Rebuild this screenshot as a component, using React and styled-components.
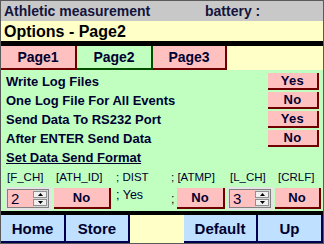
import React from "react";
import styled, { createGlobalStyle } from "styled-components";

const COLORS = {
  gray: "#c8c8c8",
  yellow: "#ffffc8",
  green: "#c0ffc0",
  pink: "#ffc0c0",
  blue: "#c0e0ff",
  ink: "#000030",
  redShadow: "#700000",
  greenShadow: "#005000",
  blueShadow: "#000050",
};

const GlobalStyle = createGlobalStyle`
  body {
    margin: 0;
    font-family: "Liberation Sans", Arial, sans-serif;
  }
`;

const options = [
  { label: "Write Log Files", value: "Yes" },
  { label: "One Log File For All Events", value: "No" },
  { label: "Send Data To RS232 Port", value: "Yes" },
  { label: "After ENTER Send Data", value: "No" },
];

function SpinBox({ value }) {
  return (
    <Spin>
      <SpinField>{value}</SpinField>
      <SpinArrows>
        <SpinArrow>
          <svg width="5" height="3" viewBox="0 0 5 3">
            <path d="M0 3 L2.5 0 L5 3 Z" fill="#000" />
          </svg>
        </SpinArrow>
        <SpinArrow>
          <svg width="5" height="3" viewBox="0 0 5 3">
            <path d="M0 0 L2.5 3 L5 0 Z" fill="#000" />
          </svg>
        </SpinArrow>
      </SpinArrows>
    </Spin>
  );
}

function App() {
  return (
    <>
      <GlobalStyle />
      <Frame>
        <TitleBar>
          <span>Athletic measurement</span>
          <span>battery :</span>
        </TitleBar>
        <Header>Options - Page2</Header>
        <Rule $h={5} />
        <TabRow>
          <Tab $w={76}>Page1</Tab>
          <Tab $w={76} $active>
            Page2
          </Tab>
          <Tab $w={74}>Page3</Tab>
        </TabRow>

        <Panel>
          {options.map((o) => (
            <OptionRow key={o.label}>
              <span>{o.label}</span>
              <Toggle>{o.value}</Toggle>
            </OptionRow>
          ))}
          <OptionRow>
            <Underlined>Set Data Send Format</Underlined>
          </OptionRow>

          <FormatGrid>
            <FieldLabel>[F_CH]</FieldLabel>
            <FieldLabel>[ATH_ID]</FieldLabel>
            <FieldLabel>; DIST</FieldLabel>
            <FieldLabel>; [ATMP]</FieldLabel>
            <FieldLabel $pad={3}>[L_CH]</FieldLabel>
            <FieldLabel $pad={3}>[CRLF]</FieldLabel>

            <SpinBox value="2" />
            <FormatButton $w={57}>No</FormatButton>
            <Separator $top>; Yes</Separator>
            <Cell>
              <Separator>;</Separator>
              <FormatButton $w={48}>No</FormatButton>
            </Cell>
            <SpinBox value="3" />
            <FormatButton $w={46}>No</FormatButton>
          </FormatGrid>
        </Panel>

        <Rule $h={4} />
        <BottomBar>
          <NavButton $w={65}>Home</NavButton>
          <NavButton $w={64}>Store</NavButton>
          <Spacer />
          <NavButton $w={74}>Default</NavButton>
          <NavButton $w={65}>Up</NavButton>
        </BottomBar>
      </Frame>
    </>
  );
}

const Frame = styled.div`
  width: 324px;
  height: 244px;
  box-sizing: border-box;
  border: 1px solid #5a5a5a;
  background: ${COLORS.yellow};
  display: flex;
  flex-direction: column;
  color: ${COLORS.ink};
`;

const TitleBar = styled.div`
  height: 20px;
  background: ${COLORS.gray};
  display: grid;
  grid-template-columns: 201px auto;
  align-items: center;
  padding-left: 3px;
  font-size: 14px;
  font-weight: bold;
  color: #14143c;
`;

const Header = styled.div`
  height: 20px;
  line-height: 21px;
  padding-left: 3px;
  font-size: 16px;
  font-weight: bold;
  color: #000;
`;

const Rule = styled.div`
  height: ${(p) => p.$h}px;
  background: #000;
  flex-shrink: 0;
`;

const TabRow = styled.div`
  height: 24px;
  display: flex;
`;

const Tab = styled.div`
  width: ${(p) => p.$w}px;
  box-sizing: border-box;
  display: flex;
  align-items: center;
  justify-content: center;
  padding-bottom: 1px;
  font-size: 14px;
  font-weight: bold;
  background: ${(p) => (p.$active ? COLORS.green : COLORS.pink)};
  border-right: 2px solid
    ${(p) => (p.$active ? COLORS.greenShadow : COLORS.redShadow)};
  border-bottom: 2px solid
    ${(p) => (p.$active ? COLORS.greenShadow : COLORS.redShadow)};
`;

const Panel = styled.div`
  height: 141px;
  box-sizing: border-box;
  background: ${COLORS.green};
  padding: 2px 4px 0 5px;
  display: flex;
  flex-direction: column;
`;

const OptionRow = styled.div`
  height: 19px;
  display: flex;
  align-items: center;
  justify-content: space-between;
  font-size: 13px;
  font-weight: bold;
`;

const Underlined = styled.span`
  text-decoration: underline;
`;

const Toggle = styled.div`
  width: 51px;
  height: 17px;
  box-sizing: border-box;
  background: ${COLORS.pink};
  border-right: 2px solid ${COLORS.redShadow};
  border-bottom: 2px solid ${COLORS.redShadow};
  display: flex;
  align-items: center;
  justify-content: center;
  font-size: 13px;
  font-weight: bold;
  letter-spacing: 0.3px;
`;

const FormatGrid = styled.div`
  margin-left: -1px;
  margin-top: 1px;
  display: grid;
  grid-template-columns: 49px 60px 55px 58px 48px 46px;
  grid-template-rows: 17px 23px;
  row-gap: 2px;
  align-items: center;
`;

const FieldLabel = styled.div`
  padding-left: ${(p) => p.$pad ?? 2}px;
  font-size: 11.5px;
  white-space: nowrap;
`;

const Cell = styled.div`
  display: flex;
  align-items: center;
  justify-content: space-between;
  padding-right: 2px;
`;

const Separator = styled.span`
  padding-left: 2px;
  font-size: 12.5px;
  align-self: ${(p) => (p.$top ? "start" : "center")};
  padding-top: ${(p) => (p.$top ? 1 : 0)}px;
`;

const FormatButton = styled.div`
  width: ${(p) => p.$w}px;
  height: 21px;
  box-sizing: border-box;
  background: ${COLORS.pink};
  border-right: 2px solid ${COLORS.redShadow};
  border-bottom: 2px solid ${COLORS.redShadow};
  display: flex;
  align-items: center;
  justify-content: center;
  font-size: 13px;
  font-weight: bold;
`;

const Spin = styled.div`
  width: 46px;
  height: 23px;
  box-sizing: border-box;
  border: 2px solid #e4e4e4;
  box-shadow: inset 0 0 0 1px #808080;
  padding: 1px;
  display: flex;
  background: ${COLORS.pink};
`;

const SpinField = styled.div`
  flex: 1;
  display: flex;
  align-items: center;
  padding-left: 3px;
  font-size: 15px;
`;

const SpinArrows = styled.div`
  width: 14px;
  display: flex;
  flex-direction: column;
  gap: 1px;
  padding: 1px 1px 1px 0;
  background: #d8d8d8;
`;

const SpinArrow = styled.div`
  flex: 1;
  box-sizing: border-box;
  background: #f0f0f0;
  border: 1px solid #909090;
  display: flex;
  align-items: center;
  justify-content: center;
`;

const BottomBar = styled.div`
  flex: 1;
  display: flex;
`;

const NavButton = styled.div`
  width: ${(p) => p.$w}px;
  box-sizing: border-box;
  background: ${COLORS.blue};
  border-right: 2px solid ${COLORS.blueShadow};
  border-bottom: 2px solid ${COLORS.blueShadow};
  display: flex;
  align-items: center;
  justify-content: center;
  font-size: 15px;
  font-weight: bold;
`;

const Spacer = styled.div`
  width: 54px;
`;

export default App;
